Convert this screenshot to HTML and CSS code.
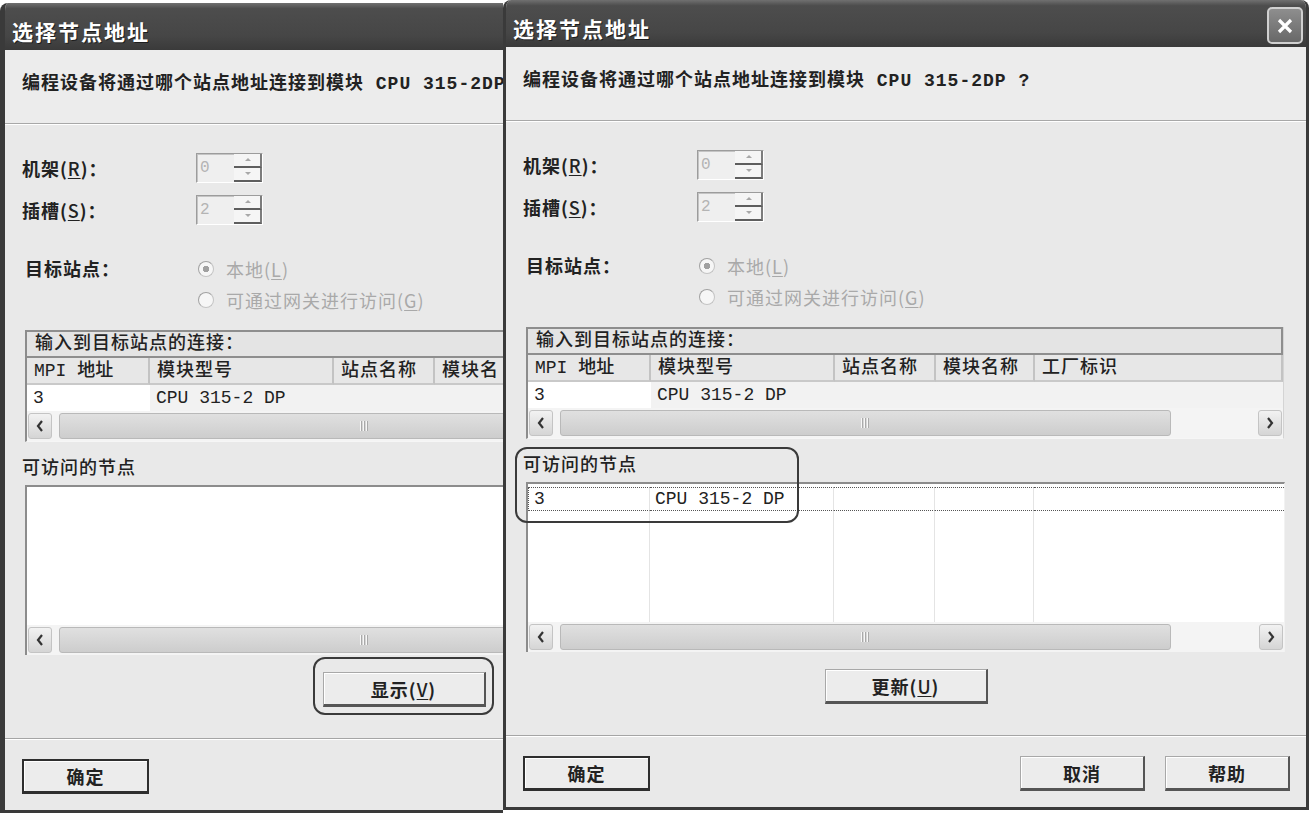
FILE: index.html
```html
<!DOCTYPE html>
<html lang="zh-CN">
<head>
    <meta charset="UTF-8">
    <meta name="viewport" content="width=device-width, initial-scale=1.0">
    <title>选择节点地址</title>
    <link rel="stylesheet" href="styles.css">
</head>
<body>

<div class="desktop">

    <!-- 后面的窗口：还没有点“显示”，右半边被前面的窗口挡住 -->
    <div class="back-clip">
    <div class="window back">
        <div class="titlebar">
            <span class="title">选择节点地址</span>
        </div>
        <div class="intro">编程设备将通过哪个站点地址连接到模块 CPU 315-2DP ?</div>

        <div class="content">
            <div class="field first">
                <span class="label">机架(<u>R</u>)：</span>
                <span class="spin"><span class="spin-val">0</span><span class="spin-btns"><i class="up"></i><i class="down"></i></span></span>
            </div>
            <div class="field">
                <span class="label">插槽(<u>S</u>)：</span>
                <span class="spin"><span class="spin-val">2</span><span class="spin-btns"><i class="up"></i><i class="down"></i></span></span>
            </div>

            <div class="target">
                <span class="label">目标站点：</span>
                <div class="radios">
                    <div class="radio on"><span>本地(<u>L</u>)</span></div>
                    <div class="radio"><span>可通过网关进行访问(<u>G</u>)</span></div>
                </div>
            </div>

            <div class="grid-box">
                <div class="caption">输入到目标站点的连接：</div>
                <div class="row head"><span>MPI 地址</span><span>模块型号</span><span>站点名称</span><span>模块名</span><span></span></div>
                <div class="row data"><span class="cur">3</span><span>CPU 315-2 DP</span><span></span><span></span><span></span></div>
                <div class="hscroll">
                    <span class="sb-btn"><svg width="10" height="14" viewBox="0 0 10 14"><path d="M7 2L3 7L7 12" fill="none" stroke="#333" stroke-width="2.2"/></svg></span>
                    <span class="thumb"><span class="grip"></span></span>
                </div>
            </div>

            <div class="nodes">
                <div class="nodes-label">可访问的节点</div>
                <div class="list">
                    <div class="list-body empty"></div>
                    <div class="hscroll">
                        <span class="sb-btn"><svg width="10" height="14" viewBox="0 0 10 14"><path d="M7 2L3 7L7 12" fill="none" stroke="#333" stroke-width="2.2"/></svg></span>
                        <span class="thumb"><span class="grip"></span></span>
                    </div>
                </div>
            </div>

            <div class="actions">
                <span class="btn wide"><span>显示(<u>V</u>)</span><span class="mark mark-btn"></span></span>
            </div>
        </div>

        <div class="footer">
            <span class="btn default">确定</span>
        </div>
    </div>
    </div>

    <!-- 前面的窗口：已更新，列出可访问的节点 -->
    <div class="window front">
        <div class="titlebar">
            <span class="title">选择节点地址</span>
            <span class="close"><svg width="22" height="22" viewBox="0 0 22 22"><path d="M5 5L17 17M17 5L5 17" stroke="#fff" stroke-width="3.2"/></svg></span>
        </div>
        <div class="intro">编程设备将通过哪个站点地址连接到模块 CPU 315-2DP ?</div>

        <div class="content">
            <div class="field first">
                <span class="label">机架(<u>R</u>)：</span>
                <span class="spin"><span class="spin-val">0</span><span class="spin-btns"><i class="up"></i><i class="down"></i></span></span>
            </div>
            <div class="field">
                <span class="label">插槽(<u>S</u>)：</span>
                <span class="spin"><span class="spin-val">2</span><span class="spin-btns"><i class="up"></i><i class="down"></i></span></span>
            </div>

            <div class="target">
                <span class="label">目标站点：</span>
                <div class="radios">
                    <div class="radio on"><span>本地(<u>L</u>)</span></div>
                    <div class="radio"><span>可通过网关进行访问(<u>G</u>)</span></div>
                </div>
            </div>

            <div class="grid-box">
                <div class="caption">输入到目标站点的连接：</div>
                <div class="row head"><span>MPI 地址</span><span>模块型号</span><span>站点名称</span><span>模块名称</span><span>工厂标识</span></div>
                <div class="row data"><span class="cur">3</span><span>CPU 315-2 DP</span><span></span><span></span><span></span></div>
                <div class="hscroll">
                    <span class="sb-btn"><svg width="10" height="14" viewBox="0 0 10 14"><path d="M7 2L3 7L7 12" fill="none" stroke="#333" stroke-width="2.2"/></svg></span>
                    <span class="thumb"><span class="grip"></span></span>
                    <span class="sb-btn right"><svg width="10" height="14" viewBox="0 0 10 14"><path d="M3 2L7 7L3 12" fill="none" stroke="#333" stroke-width="2.2"/></svg></span>
                </div>
            </div>

            <div class="nodes">
                <span class="mark mark-nodes"></span>
                <div class="nodes-label">可访问的节点</div>
                <div class="list">
                    <div class="list-body">
                        <span class="item first">3</span><span class="item">CPU 315-2 DP</span><span class="item"></span><span class="item"></span><span class="item"></span>
                        <span class="col"></span><span class="col"></span><span class="col"></span><span class="col"></span><span class="col"></span>
                    </div>
                    <div class="hscroll">
                        <span class="sb-btn"><svg width="10" height="14" viewBox="0 0 10 14"><path d="M7 2L3 7L7 12" fill="none" stroke="#333" stroke-width="2.2"/></svg></span>
                        <span class="thumb"><span class="grip"></span></span>
                        <span class="sb-btn right"><svg width="10" height="14" viewBox="0 0 10 14"><path d="M3 2L7 7L3 12" fill="none" stroke="#333" stroke-width="2.2"/></svg></span>
                    </div>
                </div>
            </div>

            <div class="actions">
                <span class="btn wide"><span>更新(<u>U</u>)</span></span>
            </div>
        </div>

        <div class="footer">
            <span class="btn default">确定</span>
            <span class="btn push">取消</span>
            <span class="btn">帮助</span>
        </div>
    </div>

</div>

</body>
</html>
```

FILE: styles.css
```css
body { margin: 0; background: #fff; color: #222; font-family: "Liberation Mono", "Noto Sans CJK SC", monospace; font-size: 18px; font-weight: 500; }
u { text-decoration: underline; text-underline-offset: 2px; }

/* 两个窗口叠在一起 */
.desktop { display: flex; align-items: flex-start; }
.back-clip { flex: none; width: 503px; height: 815px; overflow: hidden; }
.window { flex: none; width: 806px; height: 810px; box-sizing: border-box; display: flex; flex-direction: column; position: relative;
          background: #e9e9e9; border: 3px solid #3a3a3a; border-top: 0; border-radius: 8px 8px 0 0; overflow: hidden; }
.back { margin-top: 3px; border-left-width: 5px; }

/* 标题栏 */
.titlebar { flex: none; height: 47px; box-sizing: border-box; padding: 9px 3px 0 7px; display: flex; align-items: center; justify-content: space-between;
            background: linear-gradient(#707070, #4d4d4d 12%, #464646 70%, #3a3a3a); }
.title { color: #fff; font-family: "Noto Sans CJK SC", sans-serif; font-size: 21px; font-weight: bold; letter-spacing: 2px; text-shadow: 1px 1px #1e1e1e; }
.close { width: 32px; height: 33px; margin-top: -5px; border: 2px solid #d0d0d0; border-radius: 5px; display: flex; align-items: center; justify-content: center;
         background: linear-gradient(#8e8e8e, #686868); }

/* 提示文字 */
.intro { flex: none; height: 74px; box-sizing: border-box; padding: 22px 0 0 17px; line-height: 24px; white-space: nowrap; letter-spacing: 1px; font-weight: 600;
         background: #ececec; border-bottom: 1px solid #a8a8a8; box-shadow: 0 1px #fff; }

.content { flex: 1; padding: 1px 17px 0; }
.label { flex: none; width: 174px; white-space: nowrap; font-family: "Noto Sans CJK SC", sans-serif; font-weight: 700; letter-spacing: 1px; }
.label u { font-weight: 500; }

/* 机架 / 插槽 */
.field { display: flex; align-items: center; height: 30px; margin-top: 12px; }
.field.first { margin-top: 28px; }
.spin { display: flex; width: 67px; height: 30px; box-sizing: border-box; background: #efefef;
        border: 1px solid; border-color: #9c9c9c #fff #fff #9c9c9c; box-shadow: inset 1px 1px #c4c4c4; }
.spin-val { flex: 1; padding-left: 3px; line-height: 28px; color: #b4b4b4; font-weight: 400; font-size: 16px; }
.spin-btns { width: 28px; display: flex; flex-direction: column; }
.spin-btns i { flex: 1; position: relative; background: #f5f5f5; border-bottom: 2px solid #5e5e5e; border-right: 2px solid #7c7c7c; }
.spin-btns i::after { content: ""; position: absolute; left: 11px; border: 3px solid transparent; }
.spin-btns .up::after { border-bottom-color: #a8a8a8; top: 1px; }
.spin-btns .down::after { border-top-color: #a8a8a8; top: 4px; }

/* 目标站点 */
.target { display: flex; align-items: flex-start; margin-top: 28px; }
.target .label { line-height: 31px; padding-left: 3px; box-sizing: border-box; }
.radio { height: 31px; display: flex; align-items: center; gap: 12px; padding-left: 2px; color: #a9a9a9; font-family: "Noto Sans CJK SC", sans-serif; font-weight: 400; letter-spacing: 1px; }
.radio::before { content: ""; width: 14px; height: 14px; border-radius: 50%; border: 1px solid #c4c4c4; border-top-color: #a2a2a2; border-left-color: #a2a2a2; background: #f6f6f6; }
.radio.on::before { background: radial-gradient(circle, #a0a0a0 0 3px, #f6f6f6 3.5px); }

/* 连接表格 */
.grid-box { margin: 15px 5px 0 3px; border-left: 2px solid #8c8c8c; border-right: 1px solid #d4d4d4; border-bottom: 1px solid #f6f6f6; }
.caption { height: 28px; box-sizing: border-box; padding-left: 8px; line-height: 25px; letter-spacing: 1px;
           background: #e4e4e4; border: 2px solid #8e8e8e; border-left: 0; }
.row { display: grid; grid-template-columns: 123px 184px 101px 99px 1fr; }
.row span { padding-left: 7px; white-space: nowrap; overflow: hidden; }
.head { height: 27px; line-height: 26px; background: #e7e7e7; letter-spacing: 1px; }
.head span { border-right: 2px solid #c3c3c3; border-bottom: 2px solid #c9c9c9; }
.head span:first-child { letter-spacing: 0; }
.data { height: 26px; line-height: 26px; background: #f2f2f2; }
.data span { padding-left: 6px; }
.data .cur { background: #fff; }

/* 水平滚动条 */
.hscroll { flex: none; display: flex; height: 30px; box-sizing: border-box; padding: 2px 1px; background: #f4f4f4; }
.sb-btn { flex: none; width: 22px; display: flex; align-items: center; justify-content: center; border: 1px solid #c4c4c4; border-radius: 3px;
          background: linear-gradient(#f2f2f2, #d5d5d5); }
.sb-btn.right { margin-left: auto; }
.thumb { flex: none; width: 609px; margin-left: 7px; display: flex; align-items: center; justify-content: center; border: 1px solid #b9b9b9; border-radius: 3px;
         background: linear-gradient(#e0e0e0, #cdcdcd); }
.grip { width: 9px; height: 10px; background: repeating-linear-gradient(90deg, #f7f7f7 0 1px, #aaa 1px 2px, transparent 2px 3px); }

/* 可访问的节点 */
.nodes { position: relative; }
.nodes-label { margin-top: 15px; height: 24px; line-height: 24px; letter-spacing: 1px; }
.list { margin: 4px 4px 0 3px; height: 170px; box-sizing: border-box; display: flex; flex-direction: column; background: #fff;
        border-top: 2px solid #8c8c8c; border-left: 2px solid #8c8c8c; border-right: 1px solid #f2f2f2; }
.list-body { flex: 1; display: grid; grid-template-columns: 122px 184px 101px 99px 1fr; grid-template-rows: 24px 1fr; padding-top: 3px; }
.list-body.empty { display: block; }
.item { line-height: 22px; padding-left: 5px; white-space: nowrap; border-top: 1px dotted #555; border-bottom: 1px dotted #555; border-right: 1px solid #e4e4e4; }
.item.first { border-left: 1px dotted #555; }
.col { border-right: 1px solid #e4e4e4; }
.col:last-child, .item:nth-child(5) { border-right: 0; }

/* 按钮 */
.actions { display: flex; justify-content: center; margin-top: 17px; }
.btn { position: relative; flex: none; display: flex; align-items: center; justify-content: center; width: 125px; height: 35px; box-sizing: border-box;
       background: #ececec; border: 1px solid #a8a8a8; border-right: 2px solid #555; border-bottom: 3px solid #555; box-shadow: inset 1px 1px #fff;
       font-family: "Noto Sans CJK SC", sans-serif; font-weight: 700; letter-spacing: 1px; }
.btn u { font-weight: 500; }
.btn.wide { width: 163px; }
.btn.default { width: 127px; border: 2px solid #2e2e2e; border-bottom-width: 3px; }
.btn.push { margin-left: auto; }

.footer { flex: none; height: 72px; box-sizing: border-box; display: flex; gap: 20px; padding: 20px 16px 0 17px;
          border-top: 1px solid #a5a5a5; box-shadow: inset 0 1px #fff; }

/* 图上加的圈注 */
.mark { position: absolute; border: 2px solid #3a3a3a; border-radius: 12px; }
.mark-btn { left: -11px; right: -10px; top: -16px; bottom: -11px; }
.mark-nodes { left: -8px; top: -7px; width: 280px; height: 72px; }
```
